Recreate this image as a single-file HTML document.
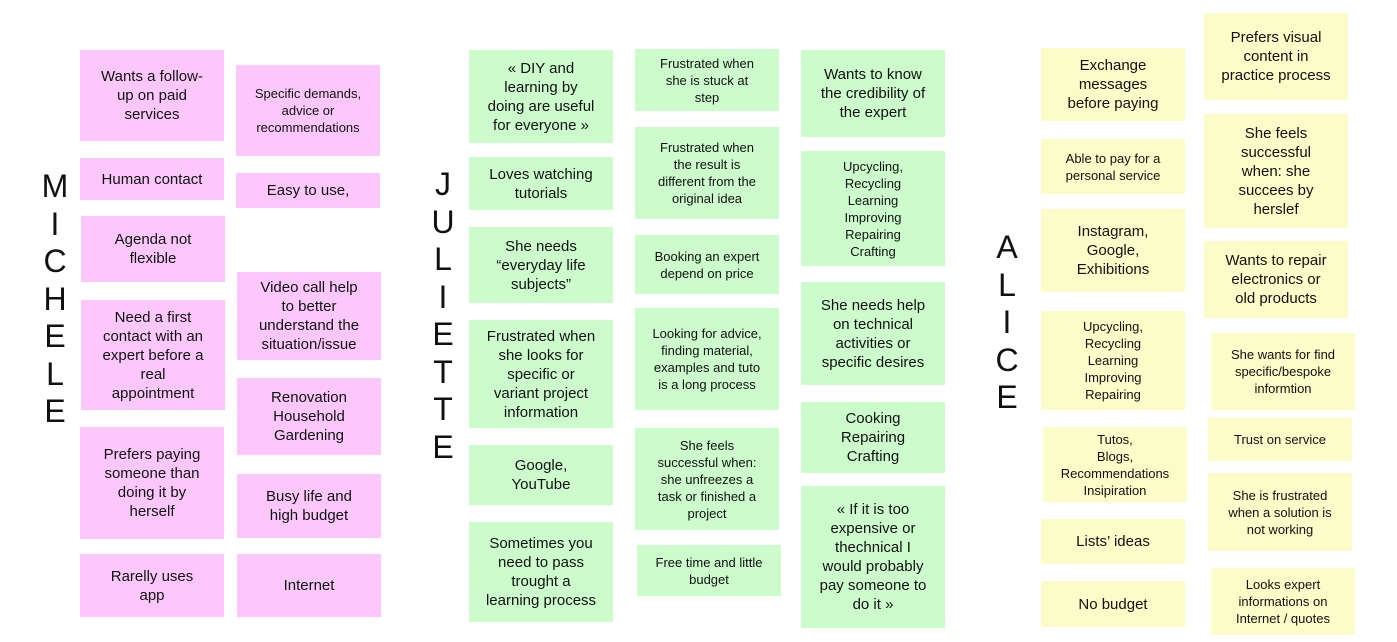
<!DOCTYPE html>
<html><head><meta charset="utf-8"><style>
body{margin:0;width:1397px;height:642px;background:#fff;position:relative;overflow:hidden;font-family:"Liberation Sans",Arial,sans-serif;color:#111}
.b{position:absolute;display:flex;align-items:center;justify-content:center;text-align:center;font-size:15px;line-height:19px;box-sizing:border-box;padding:0 2px;white-space:nowrap}
.s{font-size:13px;line-height:17px}
.p{background:#fcc8fc}.g{background:#ccfccc}.y{background:#fcfcc8}
.L{position:absolute;font-size:32px;line-height:37.5px;width:40px;text-align:center}
</style></head><body>
<div class="L" style="left:35px;top:168px">M<br>I<br>C<br>H<br>E<br>L<br>E</div>
<div class="L" style="left:423px;top:166px">J<br>U<br>L<br>I<br>E<br>T<br>T<br>E</div>
<div class="L" style="left:987px;top:229px">A<br>L<br>I<br>C<br>E</div>

<div class="b p" style="left:80px;top:50px;width:144px;height:91px">Wants a follow-<br>up on paid<br>services</div>
<div class="b p" style="left:80px;top:158px;width:144px;height:42px">Human contact</div>
<div class="b p" style="left:81px;top:216px;width:144px;height:66px">Agenda not<br>flexible</div>
<div class="b p" style="left:81px;top:300px;width:144px;height:110px">Need a first<br>contact with an<br>expert before a<br>real<br>appointment</div>
<div class="b p" style="left:80px;top:427px;width:144px;height:112px">Prefers paying<br>someone than<br>doing it by<br>herself</div>
<div class="b p" style="left:80px;top:554px;width:144px;height:63px">Rarelly uses<br>app</div>
<div class="b p s" style="left:236px;top:65px;width:144px;height:91px">Specific demands,<br>advice or<br>recommendations</div>
<div class="b p" style="left:236px;top:173px;width:144px;height:35px">Easy to use,</div>
<div class="b p" style="left:237px;top:272px;width:144px;height:88px">Video call help<br>to better<br>understand the<br>situation/issue</div>
<div class="b p" style="left:237px;top:378px;width:144px;height:77px">Renovation<br>Household<br>Gardening</div>
<div class="b p" style="left:237px;top:474px;width:144px;height:64px">Busy life and<br>high budget</div>
<div class="b p" style="left:237px;top:554px;width:144px;height:63px">Internet</div>

<div class="b g" style="left:469px;top:50px;width:144px;height:93px">« DIY and<br>learning by<br>doing are useful<br>for everyone »</div>
<div class="b g" style="left:469px;top:157px;width:144px;height:53px">Loves watching<br>tutorials</div>
<div class="b g" style="left:469px;top:227px;width:144px;height:76px">She needs<br>“everyday life<br>subjects”</div>
<div class="b g" style="left:469px;top:320px;width:144px;height:108px">Frustrated when<br>she looks for<br>specific or<br>variant project<br>information</div>
<div class="b g" style="left:469px;top:445px;width:144px;height:60px">Google,<br>YouTube</div>
<div class="b g" style="left:469px;top:522px;width:144px;height:100px">Sometimes you<br>need to pass<br>trought a<br>learning process</div>
<div class="b g s" style="left:635px;top:49px;width:144px;height:62px">Frustrated when<br>she is stuck at<br>step</div>
<div class="b g s" style="left:635px;top:127px;width:144px;height:92px">Frustrated when<br>the result is<br>different from the<br>original idea</div>
<div class="b g s" style="left:635px;top:235px;width:144px;height:59px">Booking an expert<br>depend on price</div>
<div class="b g s" style="left:635px;top:308px;width:144px;height:102px">Looking for advice,<br>finding material,<br>examples and tuto<br>is a long process</div>
<div class="b g s" style="left:635px;top:428px;width:144px;height:102px">She feels<br>successful when:<br>she unfreezes a<br>task or finished a<br>project</div>
<div class="b g s" style="left:637px;top:545px;width:144px;height:51px">Free time and little<br>budget</div>
<div class="b g" style="left:801px;top:50px;width:144px;height:87px">Wants to know<br>the credibility of<br>the expert</div>
<div class="b g s" style="left:801px;top:151px;width:144px;height:115px">Upcycling,<br>Recycling<br>Learning<br>Improving<br>Repairing<br>Crafting</div>
<div class="b g" style="left:801px;top:282px;width:144px;height:103px">She needs help<br>on technical<br>activities or<br>specific desires</div>
<div class="b g" style="left:801px;top:402px;width:144px;height:71px">Cooking<br>Repairing<br>Crafting</div>
<div class="b g" style="left:801px;top:486px;width:144px;height:142px">« If it is too<br>expensive or<br>thechnical I<br>would probably<br>pay someone to<br>do it »</div>

<div class="b y" style="left:1041px;top:48px;width:144px;height:73px">Exchange<br>messages<br>before paying</div>
<div class="b y s" style="left:1041px;top:139px;width:144px;height:55px">Able to pay for a<br>personal service</div>
<div class="b y" style="left:1041px;top:209px;width:144px;height:83px">Instagram,<br>Google,<br>Exhibitions</div>
<div class="b y s" style="left:1041px;top:311px;width:144px;height:99px">Upcycling,<br>Recycling<br>Learning<br>Improving<br>Repairing</div>
<div class="b y s" style="left:1043px;top:427px;width:144px;height:75px">Tutos,<br>Blogs,<br>Recommendations<br>Insipiration</div>
<div class="b y" style="left:1041px;top:519px;width:144px;height:45px">Lists’ ideas</div>
<div class="b y" style="left:1041px;top:581px;width:144px;height:46px">No budget</div>
<div class="b y" style="left:1204px;top:13px;width:144px;height:87px">Prefers visual<br>content in<br>practice process</div>
<div class="b y" style="left:1204px;top:114px;width:144px;height:114px">She feels<br>successful<br>when: she<br>succees by<br>herslef</div>
<div class="b y" style="left:1204px;top:241px;width:144px;height:77px">Wants to repair<br>electronics or<br>old products</div>
<div class="b y s" style="left:1211px;top:333px;width:144px;height:77px">She wants for find<br>specific/bespoke<br>informtion</div>
<div class="b y s" style="left:1208px;top:418px;width:144px;height:43px">Trust on service</div>
<div class="b y s" style="left:1208px;top:473px;width:144px;height:78px">She is frustrated<br>when a solution is<br>not working</div>
<div class="b y s" style="left:1211px;top:568px;width:144px;height:67px">Looks expert<br>informations on<br>Internet / quotes</div>
</body></html>
